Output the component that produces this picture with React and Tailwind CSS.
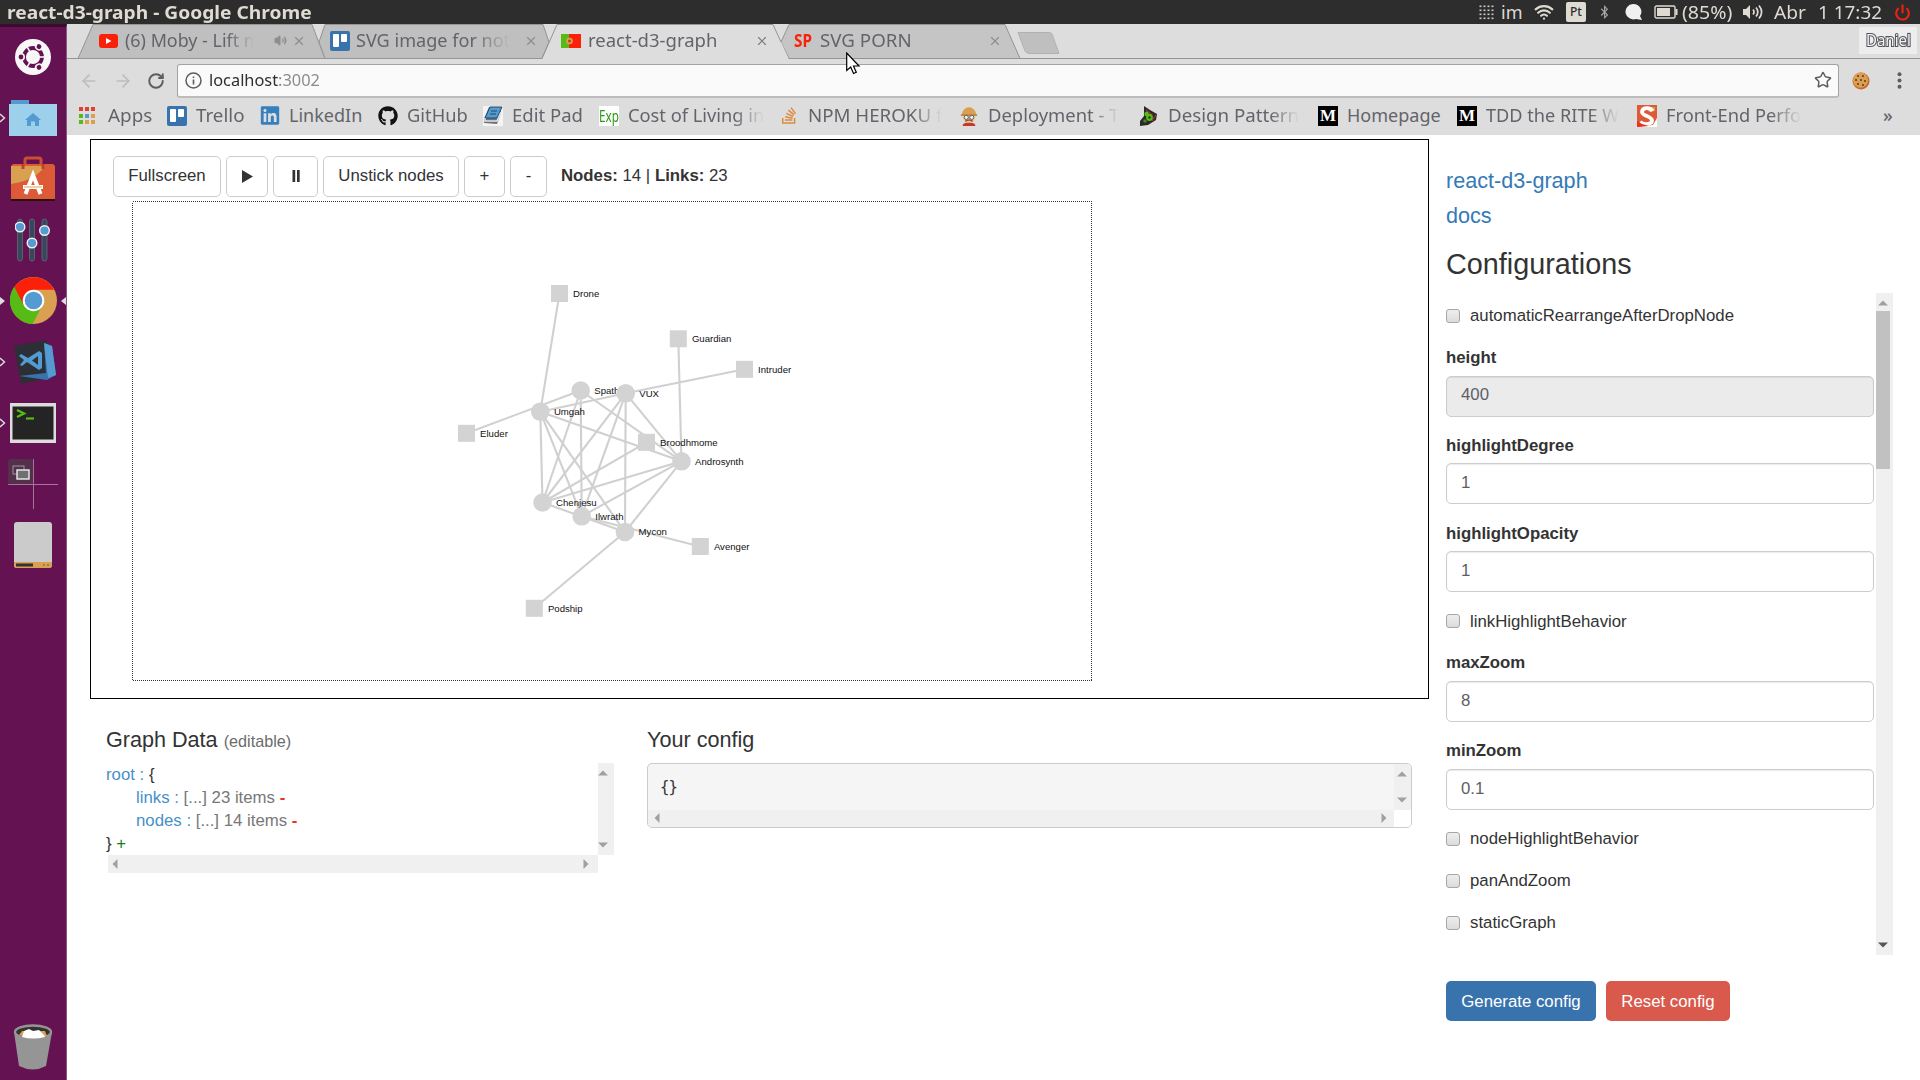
import React, { useLayoutEffect, useRef, useState } from "react";
import { FaGithub, FaLinkedin, FaStackOverflow, FaBluetoothB } from "react-icons/fa";
import { Wifi, Volume2, Power, Star, RotateCw, X, ArrowLeft, ArrowRight } from "lucide-react";

/* Stretches or narrows a line of text so that it fills its box exactly. */
function Fit({ className, children }) {
  const box = useRef(null);
  const text = useRef(null);
  const [scale, setScale] = useState(1);
  useLayoutEffect(() => {
    setScale(box.current.clientWidth / text.current.offsetWidth);
  }, []);
  return (
    <span ref={box} className={"block shrink-0 whitespace-nowrap " + className}>
      <span ref={text} className="inline-block origin-left" style={{ transform: `scaleX(${scale})` }}>
        {children}
      </span>
    </span>
  );
}

function TrelloIcon() {
  return (
    <svg width="20" height="20" viewBox="0 0 20 20" className="shrink-0">
      <rect width="20" height="20" rx="2" fill="#3873ae" />
      <rect x="3" y="3" width="6" height="13" rx="1" fill="#fff" />
      <rect x="11" y="3" width="6" height="8" rx="1" fill="#fff" />
    </svg>
  );
}

function MediumIcon() {
  return (
    <span className="flex h-5 w-5 shrink-0 items-center justify-center bg-black font-['Liberation_Serif'] text-[17px] font-bold leading-none text-white">
      M
    </span>
  );
}

function AppsIcon() {
  const colors = ["#e2402f", "#e2402f", "#e2402f", "#56bb14", "#539bd0", "#d8a050", "#56bb14", "#d8a050", "#d8a050"];
  return (
    <span className="mr-[2px] grid h-[17px] w-[18px] shrink-0 grid-cols-3 content-between justify-items-start">
      {colors.map((c, i) => (
        <span key={i} className="h-[4px] w-[4px]" style={{ backgroundColor: c }} />
      ))}
    </span>
  );
}

function EditPadIcon() {
  return (
    <svg width="20" height="20" viewBox="0 0 20 20" className="shrink-0">
      <rect width="20" height="20" fill="#f4f4f4" />
      <path d="M6 1 18 1 18 7 14 18 1 17 1 13Z" fill="#6f7276" />
      <path d="M7 1H19L14 12H2Z" fill="#539bd0" stroke="#24486b" />
      <path d="M2 12v3h12l4-9" fill="none" stroke="#dfe6ec" strokeWidth="1.5" />
      <path d="M8 5h6M7 8h6" stroke="#24486b" />
    </svg>
  );
}

function ExpIcon() {
  return (
    <span className="flex h-[20px] w-5 shrink-0 items-center bg-white font-['Noto_Sans'] text-[17px] leading-none text-[#2a9a12]">
      <Fit className="w-5">Exp</Fit>
    </span>
  );
}

function DeployIcon() {
  return (
    <svg width="20" height="20" viewBox="0 0 20 22" className="shrink-0">
      <ellipse cx="10" cy="12" rx="7" ry="7" fill="#ecc9a0" />
      <path d="M2 10a8 8.5 0 0 1 16 0Z" fill="#d8a050" />
      <path d="M1 10h18" stroke="#b9782c" strokeWidth="1.5" />
      <circle cx="7" cy="12.5" r="2.3" fill="#e8eef2" stroke="#555" />
      <circle cx="13" cy="12.5" r="2.3" fill="#e8eef2" stroke="#555" />
      <path d="M6 17q4-3 8 0" stroke="#8a5a2b" strokeWidth="1.6" fill="none" />
      <path d="M3 22q0-4 7-3.500q7-.5 7 3.500Z" fill="#c8372a" />
    </svg>
  );
}

function PatternIcon() {
  return (
    <svg width="20" height="20" viewBox="0 0 20 20" className="shrink-0">
      <path d="M5 0 11 4 18 8 17 14 9 19 1 20 1 15 5 10Z" fill="#2a2a2a" />
      <path d="M7 3 14 9 7 10Z" fill="#8b3a33" />
      <circle cx="7.500" cy="8" r="2.200" fill="#56bb14" />
      <circle cx="10.500" cy="11.500" r="3.400" fill="#56bb14" />
      <circle cx="10.500" cy="11.500" r="1.200" fill="#2a2a2a" />
      <circle cx="6" cy="15" r="1.800" fill="#3f8a1a" />
      <path d="M13 15 17 9" stroke="#c8372a" />
    </svg>
  );
}

function SmashingIcon() {
  return (
    <svg width="20" height="22" viewBox="0 0 20 22" className="shrink-0">
      <path d="M0 0H20V22H0Z" fill="#fff" />
      <path d="M0 0H20V13L16 20 0 22Z" fill="#dc5a36" />
      <path d="M8 2H18V6L12 7Z" fill="#d8a050" />
      <path d="M15.500 6C13 1.500 5 2.500 5 7c0 4 10 4 10 8.500 0 4-8 5-12 1.500" fill="none" stroke="#fff" strokeWidth="3.800" />
      <path d="M0 16 5 19 12 21 0 22Z" fill="#f0301c" />
    </svg>
  );
}

const bookmarks = [
  { box: "w-[88px]", label: "Apps", fit: "w-[44px]", icon: <AppsIcon /> },
  { box: "w-[93px]", label: "Trello", fit: "w-[49px]", icon: <TrelloIcon /> },
  { box: "w-[118px]", label: "LinkedIn", fit: "w-[73px]", icon: <FaLinkedin className="h-[21px] w-5 shrink-0 text-[#3580bd]" /> },
  { box: "w-[105px]", label: "GitHub", fit: "w-[61px]", icon: <FaGithub className="h-5 w-5 shrink-0 text-[#111]" /> },
  { box: "w-[116px]", label: "Edit Pad", fit: "w-[71px]", icon: <EditPadIcon /> },
  { box: "w-[180px]", label: "Cost of Living in", fit: "w-[136px]", icon: <ExpIcon />, fade: true },
  { box: "w-[180px]", label: "NPM HEROKU f", fit: "w-[134px]", icon: <FaStackOverflow className="h-[19px] w-5 shrink-0 text-[#dd8a3c]" />, fade: true },
  { box: "w-[180px]", label: "Deployment - T", fit: "w-[131px]", icon: <DeployIcon />, fade: true },
  { box: "w-[179px]", label: "Design Pattern", fit: "w-[131px]", icon: <PatternIcon />, fade: true },
  { box: "w-[139px]", label: "Homepage", fit: "w-[94px]", icon: <MediumIcon /> },
  { box: "w-[180px]", label: "TDD the RITE W", fit: "w-[133px]", icon: <MediumIcon />, fade: true },
  { box: "w-[180px]", label: "Front-End Perfo", fit: "w-[135px]", icon: <SmashingIcon />, fade: true },
];

function SystemBar() {
  return (
    <header className="flex h-6 shrink-0 items-center bg-[#2d2d2d] pl-[7px] font-['Noto_Sans',sans-serif] text-[18px] leading-6 text-[#dfdbd2]">
      <Fit className="w-[305px] font-bold">react-d3-graph - Google Chrome</Fit>
      <div className="ml-[1167px] flex items-center">
        <svg width="15" height="15" viewBox="0 0 15 15" className="shrink-0" fill="#c9c9c9">
          {[0.5, 4.5, 8.5, 12.5].map((y) => [0, 4, 8, 12].map((x) => <rect key={x + "-" + y} x={x + 0.5} y={y} width="2" height="1.600" />))}
        </svg>
        <Fit className="ml-[7px] w-[21px]">im</Fit>
        <Wifi className="ml-[12px] h-[20px] w-[20px] shrink-0" strokeWidth={2.6} />
        <span className="ml-[12px] flex h-[20px] w-[20px] shrink-0 items-center justify-center rounded-[2px] bg-[#dfdbd2] text-[12px] font-medium text-[#2d2d2d]">Pt</span>
        <FaBluetoothB className="ml-[13px] h-[14px] w-[11px] shrink-0 text-[#a9a9a9]" />
        <svg width="19" height="18" viewBox="0 0 19 18" className="ml-[14px] shrink-0">
          <path d="M9 1a8 7.700 0 1 0 3 15L18 17 16 13A8 7.700 0 0 0 9 1Z" fill="#f0f0f0" />
        </svg>
        <svg width="24" height="14" viewBox="0 0 24 14" className="ml-[11px] shrink-0">
          <rect x="1" y="1" width="20" height="12" rx="1.500" fill="none" stroke="#dfdbd2" strokeWidth="1.400" />
          <rect x="3" y="3" width="13" height="8" fill="#dfdbd2" />
          <rect x="21.500" y="4" width="2" height="6" fill="#dfdbd2" />
        </svg>
        <Fit className="ml-[4px] w-[50px]">(85%)</Fit>
        <svg width="20" height="18" viewBox="0 0 20 18" className="ml-[11px] shrink-0">
          <path d="M0 6H3L7 2V16L3 12H0Z" fill="#dfdbd2" />
          <path d="M10 6.500q2 2.500 0 5M13 4.500q3.600 4.500 0 9M16 2.500q5.200 6.500 0 13" fill="none" stroke="#dfdbd2" strokeWidth="1.700" />
        </svg>
        <Fit className="ml-[11px] w-[32px]">Abr</Fit>
        <Fit className="ml-[12px] w-[64px]">1 17:32</Fit>
        <Power className="ml-[12px] h-[17px] w-[17px] shrink-0 text-[#ee2211]" strokeWidth={3} />
      </div>
    </header>
  );
}

function Tile({ children, mark }) {
  return (
    <div className="relative flex h-[61px] w-[66px] shrink-0 items-center justify-center">
      {mark === "open" && (
        <svg width="6" height="10" viewBox="0 0 6 10" className="absolute left-0 top-[26px]">
          <path d="M0 1 4.500 5 0 9" fill="none" stroke="#ddd" strokeWidth="1.400" />
        </svg>
      )}
      {mark === "active" && (
        <>
          <svg width="5" height="10" viewBox="0 0 5 10" className="absolute left-0 top-[26px]">
            <path d="M0 1 5 5 0 9Z" fill="#ddd" />
          </svg>
          <svg width="5" height="10" viewBox="0 0 5 10" className="absolute right-0 top-[26px]">
            <path d="M5 1 0 5 5 9Z" fill="#ddd" />
          </svg>
        </>
      )}
      {children}
    </div>
  );
}

function Launcher() {
  return (
    <aside className="flex w-[67px] shrink-0 flex-col border-r border-t-[3px] border-r-[#8a5a7c] border-t-[#3d0b30] bg-[#651253] pb-[3px]">
      <div className="-mt-px">
        <Tile>
          <svg width="36" height="36" viewBox="0 0 36 36">
            <circle cx="18" cy="18" r="18" fill="#f7f7f7" />
            <circle cx="18" cy="18" r="9" fill="none" stroke="#651253" strokeWidth="3.800" />
            {[0, 120, 240].map((a) => (
              <g key={a} transform={`rotate(${a} 18 18)`}>
                <path d="M24 18H32" stroke="#f7f7f7" strokeWidth="1.600" />
                <circle cx="6" cy="18" r="3.200" fill="#651253" stroke="#f7f7f7" strokeWidth="1.600" />
              </g>
            ))}
          </svg>
        </Tile>
      </div>
      <Tile mark="open">
        <svg width="50" height="36" viewBox="0 0 50 36">
          <path d="M3 0H21V6H3Z" fill="#539bd0" />
          <rect x="1" y="4" width="48" height="32" fill="#9dd0ea" />
          <path d="M25 13 33 20H31V26H27V21.500H23V26H19V20H17Z" fill="#539bd0" />
        </svg>
      </Tile>
      <Tile>
        <svg width="46" height="46" viewBox="0 0 46 46">
          <path d="M15 12V4Q15 2 17 2H29Q31 2 31 4V12" fill="none" stroke="#c94f32" strokeWidth="3" />
          <path d="M3 8H43L45 10V44H1V10Z" fill="#dc5a36" />
          <path d="M1 10H35Q26 24 1 28Z" fill="#d8a050" />
          <path d="M13 8v5M33 8v5" stroke="#b8452c" strokeWidth="3" />
          <path d="M1 44H45" stroke="#2b1010" strokeWidth="2" />
          <path d="M15.500 38 23 19 30.500 38" fill="none" stroke="#fff" strokeWidth="4" />
          <path d="M13 31H33" stroke="#fff" strokeWidth="4" />
          <path d="M14 31H32" stroke="#d8a050" strokeWidth="1" />
        </svg>
      </Tile>
      <Tile>
        <svg width="36" height="44" viewBox="0 0 36 44">
          {[[5, 9], [17, 25], [29.5, 12.5]].map(([x, y]) => (
            <g key={x}>
              <rect x={x - 2.5} y="1" width="5" height="42" rx="2.500" fill="#34495e" stroke="#61606a" />
              <circle cx={x} cy={y} r="4.800" fill="#539bd0" stroke="#eee" strokeWidth="1.400" />
            </g>
          ))}
        </svg>
      </Tile>
      <Tile mark="active">
        <svg width="47" height="47" viewBox="0 0 48 48">
          <circle cx="24" cy="24" r="24" fill="#d8a050" />
          <path d="M24 24 4.500 10A24 24 0 0 0 23 48L33 29Z" fill="#56bb14" />
          <path d="M4.500 10A24 24 0 0 1 45 13H24L14 29Z" fill="#fb2008" />
          <circle cx="24" cy="24" r="11" fill="#fff" />
          <circle cx="24" cy="24" r="9" fill="#539bd0" />
        </svg>
      </Tile>
      <Tile mark="open">
        <svg width="44" height="46" viewBox="0 0 44 46" className="ml-1">
          <path d="M1 7 33 1 40 38 8 45Z" fill="#2d2f36" />
          <path d="M31 4 39 7 43 36 34 41 6 37 33 34Z" fill="#3873ae" />
          <path d="M31 4 39 7 43 36 35 39Z" fill="#539bd0" />
          <path d="M26 12 29 14V29L26 31 14 23 9 27 7 26 11 21 6 17 8 15 15 19Z" fill="#539bd0" />
          <path d="M25 17V26L19 21.500Z" fill="#2d2f36" />
        </svg>
      </Tile>
      <Tile mark="open">
        <svg width="46" height="40" viewBox="0 0 46 40">
          <rect width="46" height="40" fill="#dcdcdc" />
          <rect x="2.500" y="3.500" width="41" height="33" fill="#242424" />
          <path d="M7 7 14 10.500 7 14" fill="none" stroke="#56bb14" strokeWidth="2.400" />
          <path d="M16 15.500H24" stroke="#56bb14" strokeWidth="2.200" />
        </svg>
      </Tile>
      <Tile>
        <svg width="50" height="50" viewBox="0 0 50 50">
          <rect width="25" height="25" rx="3" fill="#54304d" />
          <path d="M25.500 0V50M0 25.500H50" stroke="#a5749a" />
          <rect x="5" y="7" width="11" height="8" fill="none" stroke="#999" />
          <rect x="9" y="11" width="12" height="9" fill="#707070" stroke="#eee" strokeWidth="1.400" />
        </svg>
      </Tile>
      <Tile>
        <svg width="40" height="46" viewBox="0 0 40 46">
          <rect x="1" width="38" height="46" rx="3" fill="#cbcbcb" />
          <path d="M1 40H39V43Q39 46 36 46H4Q1 46 1 43Z" fill="#d8a050" />
          <rect x="3" y="41.500" width="17" height="3" fill="#333" />
          <path d="M30 43h6" stroke="#7a5a2c" strokeDasharray="2 2" />
        </svg>
      </Tile>
      <div className="mt-auto">
        <Tile>
          <svg width="40" height="46" viewBox="0 0 40 46">
            <path d="M1 8 6 42Q20 49 33 42L39 8Z" fill="#959595" />
            <ellipse cx="20" cy="8" rx="18" ry="6.500" fill="#333" stroke="#959595" strokeWidth="2.400" />
            <path d="M6 11 9 7 32 7 34 12Q20 17 6 11Z" fill="#d8a050" />
            <path d="M9 13 11 7 16 5 20 7 26 6 31 11 32 13Q20 16 9 13Z" fill="#fff" />
          </svg>
        </Tile>
      </div>
    </aside>
  );
}

function TabStrip() {
  return (
    <div className="relative flex h-[35px] items-center pb-[2px] font-['Noto_Sans',sans-serif] text-[17.5px] leading-[33px] text-[#63646a]">
      <svg width="1853" height="35" viewBox="67 24 1853 35" className="absolute left-0 top-0">
        <path d="M67 58.500H1920" stroke="#949494" />
        <path d="M78 58.500 93 24.500H312L325 58.500Z" fill="#bfbfbf" stroke="#949494" />
        <path d="M319 42 325 24.500H543L549 42 542 58.500H325Z" fill="#bfbfbf" stroke="#949494" />
        <path d="M789 58.500 781 42 789 24.500H1005L1020 58.500Z" fill="#c5c5c5" stroke="#949494" />
        <path d="M542 59.500 557 24.500H773L781 42 789 59.500Z" fill="#dddddd" />
        <path d="M542 58.500 557 24.500H773L781 42" fill="none" stroke="#949494" />
        <path d="M1018 32.500H1049Q1051 32.500 1052 34L1059 53.500H1029Q1026 53 1025 51Z" fill="#bfbfbf" stroke="#b2b2b2" />
      </svg>
      <div className="relative ml-[32px] flex w-[231px] items-center">
        <svg width="19" height="14" viewBox="0 0 19 14" className="shrink-0">
          <rect width="19" height="14" rx="3" fill="#f92108" />
          <path d="M7 4 12.500 7 7 10Z" fill="#fff" />
        </svg>
        <Fit className="ml-[7px] w-[136px] [mask-image:linear-gradient(to_right,black_75%,transparent_95%)]">(6) Moby - Lift m</Fit>
        <Volume2 className="ml-[13px] h-[13px] w-[13px] shrink-0 text-[#8d8d8d]" fill="#8d8d8d" />
        <X className="ml-[5px] h-[14px] w-[14px] shrink-0 text-[#8d8d8d]" />
      </div>
      <div className="relative flex w-[231px] items-center">
        <TrelloIcon />
        <Fit className="ml-[6px] w-[154px] [mask-image:linear-gradient(to_right,black_75%,transparent)]">SVG image for not</Fit>
        <X className="ml-[14px] h-[14px] w-[14px] shrink-0 text-[#8d8d8d]" />
      </div>
      <div className="relative flex w-[233px] items-center">
        <svg width="20" height="14" viewBox="0 0 20 14" className="shrink-0">
          <rect width="20" height="14" fill="#fb2008" />
          <rect width="8" height="14" fill="#56bb14" />
          <circle cx="8.500" cy="7" r="3.300" fill="#d8a050" />
          <circle cx="8.500" cy="7" r="1.500" fill="#c8372a" />
        </svg>
        <Fit className="ml-[7px] w-[129px]">react-d3-graph</Fit>
        <X className="ml-[38px] h-[14px] w-[14px] shrink-0 text-[#7d7d7d]" />
      </div>
      <div className="relative flex items-center">
        <Fit className="w-[18px] text-[17px] font-bold text-[#f92108]">SP</Fit>
        <Fit className="ml-[8px] w-[92px]">SVG PORN</Fit>
        <X className="ml-[76px] h-[14px] w-[14px] shrink-0 text-[#8d8d8d]" />
      </div>
      <span className="relative ml-auto mr-[3px] flex h-[27px] w-[58px] items-center justify-center bg-[#ededed] text-[16px] text-[#f4f4f4] [-webkit-text-stroke:2.2px_#55565c] [paint-order:stroke_fill]">
        <Fit className="w-[45px]">Daniel</Fit>
      </span>
      <svg width="16" height="24" viewBox="0 0 16 24" className="absolute left-[779px] top-[28px] z-10">
        <path d="M.7 1V18.500L4.700 15 7.500 21.500 10.300 20.200 7.500 14H13Z" fill="#fff" stroke="#000" strokeWidth="1.200" />
      </svg>
    </div>
  );
}

function Toolbar() {
  return (
    <div className="flex h-[40px] items-center pt-[3px]">
      <ArrowLeft className="ml-[12px] h-[20px] w-[20px] text-[#bdbdbd]" />
      <ArrowRight className="ml-[14px] h-[20px] w-[20px] text-[#bdbdbd]" />
      <RotateCw className="ml-[14px] h-[18px] w-[18px] text-[#5c5d62]" strokeWidth={2.6} />
      <div className="ml-[12px] flex h-[34px] w-[1662px] items-center rounded-[3px] border border-b-2 border-[#a3a3a3] border-b-[#bcbcbc] bg-[#fafafa] pl-[7px] pr-[6px] font-['Noto_Sans',sans-serif] text-[16.500px] leading-8">
        <svg width="17" height="17" viewBox="0 0 17 17" className="shrink-0">
          <circle cx="8.500" cy="8.500" r="7.500" fill="none" stroke="#5c5d62" strokeWidth="1.500" />
          <path d="M8.500 7.500V12.500M8.500 4.500V6" stroke="#5c5d62" strokeWidth="1.600" />
        </svg>
        <Fit className="ml-[7px] w-[111px] text-[#2d2f33]">
          localhost<span className="text-[#8c8c8c]">:3002</span>
        </Fit>
        <Star className="ml-auto h-[18px] w-[18px] text-[#5c5d62]" />
      </div>
      <svg width="18" height="18" viewBox="0 0 18 18" className="ml-[13px]">
        <circle cx="9" cy="9" r="8.500" fill="#c9652e" />
        <circle cx="8.500" cy="8.200" r="7.600" fill="#d8a050" />
        {[[6, 4], [11, 4], [4, 8], [9, 8], [13, 9], [6, 12], [11, 13]].map(([x, y]) => (
          <circle key={x + "-" + y} cx={x} cy={y} r="1" fill="#6b3519" />
        ))}
      </svg>
      <svg width="5" height="17" viewBox="0 0 5 17" className="ml-[27px]" fill="#5c5d62">
        <circle cx="2.500" cy="2.200" r="2" />
        <circle cx="2.500" cy="8.500" r="2" />
        <circle cx="2.500" cy="14.800" r="2" />
      </svg>
    </div>
  );
}

function BookmarkBar() {
  return (
    <div className="flex h-[36px] items-center pb-[3px] pl-[12px] font-['Noto_Sans',sans-serif] text-[18px] leading-[33px] text-[#63646a]">
      {bookmarks.map((b) => (
        <div key={b.label} className={"flex shrink-0 items-center gap-[9px] " + b.box}>
          {b.icon}
          <Fit className={b.fit + (b.fade ? " [mask-image:linear-gradient(to_right,black_78%,transparent_100%)]" : "")}>{b.label}</Fit>
        </div>
      ))}
      <span className="ml-[66px] font-medium">»</span>
    </div>
  );
}

const nodes = [
  ["Androsynth", 681.5, 461.3, "c"], ["Chenjesu", 542.5, 502.5, "c"], ["Ilwrath", 581.7, 516.3, "c"],
  ["Mycon", 625, 532, "c"], ["Spathi", 580.7, 390.5, "c"], ["Umgah", 540.3, 411.7, "c"], ["VUX", 625.7, 393.3, "c"],
  ["Guardian", 678.3, 338.8, "s"], ["Broodhmome", 646.5, 442.3, "s"], ["Avenger", 700.3, 546.5, "s"],
  ["Podship", 534.3, 608.3, "s"], ["Eluder", 466.5, 433.3, "s"], ["Drone", 559.5, 293.5, "s"], ["Intruder", 744.5, 369.3, "s"],
];
const links = [
  ["Drone", "Umgah"], ["Guardian", "Androsynth"], ["Intruder", "VUX"], ["Eluder", "Spathi"],
  ["Umgah", "Androsynth"], ["Umgah", "VUX"], ["Umgah", "Chenjesu"], ["Umgah", "Ilwrath"], ["Umgah", "Mycon"],
  ["Spathi", "Chenjesu"], ["Spathi", "Ilwrath"], ["Spathi", "Androsynth"],
  ["VUX", "Chenjesu"], ["VUX", "Ilwrath"], ["VUX", "Mycon"], ["VUX", "Androsynth"],
  ["Broodhmome", "Chenjesu"], ["Androsynth", "Chenjesu"], ["Androsynth", "Ilwrath"], ["Androsynth", "Mycon"],
  ["Chenjesu", "Mycon"], ["Ilwrath", "Avenger"], ["Podship", "Mycon"],
];

function Graph() {
  const at = Object.fromEntries(nodes.map((n) => [n[0], n]));
  return (
    <svg width="960" height="480" viewBox="132 201 960 480" className="ml-[41px] mt-[4px] block">
      <rect x="132.500" y="201.500" width="959" height="479" fill="none" stroke="#333" strokeDasharray="1 1" shapeRendering="crispEdges" />
      {links.map(([a, b]) => (
        <line key={a + b} x1={at[a][1]} y1={at[a][2]} x2={at[b][1]} y2={at[b][2]} stroke="#d0d0d0" strokeWidth="2.100" />
      ))}
      {nodes.map(([name, x, y, kind]) => (
        <g key={name}>
          {kind === "c" ? <circle cx={x} cy={y} r="9.300" fill="#d3d3d3" /> : <rect x={x - 8.5} y={y - 8.5} width="17" height="17" fill="#d3d3d3" />}
          <text x={x + 13.6} y={y + 3.3} fontSize="9.600" fill="#111">{name}</text>
        </g>
      ))}
    </svg>
  );
}

function ToolButton({ className, children }) {
  return (
    <button className={"flex h-[41px] items-center justify-center rounded-[5px] border border-[#ccc] bg-white pb-px " + className}>{children}</button>
  );
}

function Arrow({ dir, className, dark }) {
  const d = { up: "M0 9 6 3 12 9Z", down: "M0 3 6 9 12 3Z", left: "M9 0 3 6 9 12Z", right: "M3 0 9 6 3 12Z" }[dir];
  return (
    <svg width="10" height="10" viewBox="0 0 12 12" className={"shrink-0 " + (className || "")}>
      <path d={d} fill={dark ? "#555" : "#a0a0a0"} />
    </svg>
  );
}

function DataLine({ name }) {
  return (
    <p className="pl-[30px] text-[#777]">
      <span className="text-[#4690c8]">{name.key} :</span> [...] {name.count} items <span className="font-bold text-[#f03020]">-</span>
    </p>
  );
}

function Check({ label }) {
  return (
    <label className="flex h-[42px] items-center gap-[10px] pt-[2px]">
      <span className="h-[14px] w-[14px] rounded-[3px] border border-[#a6a6a6] bg-gradient-to-b from-[#eee] to-[#dcdcdc]" />
      {label}
    </label>
  );
}

function Field({ label, value, disabled }) {
  return (
    <div className="h-[87.800px] pt-[10px]">
      <p className="h-[29.500px] font-bold leading-6">{label}</p>
      <div className={"flex h-[41px] items-center rounded-[5px] border border-[#ccc] px-[14px] pb-[2px] text-[#5c6066] shadow-[inset_0_1px_1px_rgba(0,0,0,0.08)] " + (disabled ? "bg-[#ebebeb]" : "bg-white")}>
        {value}
      </div>
    </div>
  );
}

function Sandbox() {
  return (
    <div className="w-[1339px] shrink-0">
      <section className="h-[560px] border border-black pt-[16px]">
        <div className="ml-[22px] flex items-center gap-[5px]">
          <ToolButton className="w-[108px]">Fullscreen</ToolButton>
          <ToolButton className="w-[42px]">
            <svg width="11" height="14" viewBox="0 0 11 14"><path d="M0 1 11 7.500 0 14Z" fill="#333" /></svg>
          </ToolButton>
          <ToolButton className="w-[45px]">
            <svg width="8" height="12" viewBox="0 0 8 12"><path d="M.5 0h2.700v12H.5ZM5 0h2.700v12H5Z" fill="#333" /></svg>
          </ToolButton>
          <ToolButton className="w-[136px]">Unstick nodes</ToolButton>
          <ToolButton className="w-[41px]">+</ToolButton>
          <ToolButton className="w-[37px]">-</ToolButton>
          <p className="mb-px ml-[9px]"><b>Nodes:</b> 14 | <b>Links:</b> 23</p>
        </div>
        <Graph />
      </section>
      <div className="flex pl-[16px] pt-[28px]">
        <section className="w-[541px]">
          <h4 className="h-[36px] text-[21.600px] leading-[26px]">
            Graph Data <span className="text-[16.200px] text-[#6c6c6c]">(editable)</span>
          </h4>
          <div className="flex h-[92px] w-[508px]">
            <div className="flex-1 leading-[23px]">
              <p><span className="text-[#4690c8]">root :</span> {"{"}</p>
              <DataLine name={{ key: "links", count: 23 }} />
              <DataLine name={{ key: "nodes", count: 14 }} />
              <p>{"}"} <span className="text-[#188018]">+</span></p>
            </div>
            <div className="flex w-[16px] flex-col justify-between bg-[#f0f0f0] py-[5px]">
              <Arrow dir="up" />
              <Arrow dir="down" />
            </div>
          </div>
          <div className="ml-[2px] flex h-[18px] w-[490px] items-center justify-between bg-[#f0f0f0] pl-[2px] pr-[7px]">
            <Arrow dir="left" />
            <Arrow dir="right" />
          </div>
        </section>
        <section>
          <h4 className="h-[36px] text-[21.600px] leading-[26px]">Your config</h4>
          <div className="h-[65px] w-[765px] overflow-hidden rounded-[5px] border border-[#ccc] bg-[#f5f5f5]">
            <div className="flex h-[46px] justify-between pl-[12px]">
              <pre className="pt-[12px] font-['DejaVu_Sans_Mono',monospace] text-[15.600px] leading-[22px] tracking-[-1px]">{"{}"}</pre>
              <div className="flex w-[17px] flex-col justify-between bg-[#f0f0f0] pb-[5px] pl-[3px] pt-[5px]">
                <Arrow dir="up" />
                <Arrow dir="down" />
              </div>
            </div>
            <div className="flex h-[17px]">
              <div className="flex flex-1 items-center justify-between bg-[#f0f0f0] pb-px pl-[4px] pr-[5px]">
                <Arrow dir="left" />
                <Arrow dir="right" />
              </div>
              <div className="w-[17px] bg-white" />
            </div>
          </div>
        </section>
      </div>
    </div>
  );
}

function ConfigPanel() {
  return (
    <div className="ml-[17px] w-[447px] pt-[24px]">
      <nav className="text-[21.600px] leading-[35px] text-[#337ab7]">
        <p>react-d3-graph</p>
        <p>docs</p>
      </nav>
      <h3 className="h-[60px] text-[28.800px] leading-[62px]">Configurations</h3>
      <div className="flex h-[662px]">
        <div className="w-[429px] pt-px">
          <Check label="automaticRearrangeAfterDropNode" />
          <Field label="height" value="400" disabled />
          <Field label="highlightDegree" value="1" />
          <Field label="highlightOpacity" value="1" />
          <Check label="linkHighlightBehavior" />
          <Field label="maxZoom" value="8" />
          <Field label="minZoom" value="0.1" />
          <Check label="nodeHighlightBehavior" />
          <Check label="panAndZoom" />
          <Check label="staticGraph" />
        </div>
        <div className="ml-[2px] flex w-[17px] flex-col bg-[#f0f0f0]">
          <Arrow dir="up" className="ml-[2px] mt-[5px]" />
          <div className="mt-[3px] h-[158px] w-[14px] bg-[#c1c1c1]" />
          <Arrow dir="down" dark className="mb-[5px] ml-[2px] mt-auto" />
        </div>
      </div>
      <div className="mt-[26px] flex gap-[10px] text-white">
        <button className="h-[40px] w-[150px] rounded-[5px] bg-[#3873ae] pt-px">Generate config</button>
        <button className="h-[40px] w-[124px] rounded-[5px] bg-[#d9594c] pt-px">Reset config</button>
      </div>
    </div>
  );
}

export default function App() {
  return (
    <div className="flex h-[1080px] w-[1920px] flex-col overflow-hidden bg-white font-['Liberation_Sans',sans-serif] text-[16.800px] text-[#333]">
      <SystemBar />
      <div className="flex min-h-0 flex-1">
        <Launcher />
        <div className="flex min-w-0 flex-1 flex-col">
          <div className="h-[111px] shrink-0 bg-[#dddddd]">
            <TabStrip />
            <Toolbar />
            <BookmarkBar />
          </div>
          <main className="flex flex-1 pl-[23px] pt-[4px]">
            <Sandbox />
            <ConfigPanel />
          </main>
        </div>
      </div>
    </div>
  );
}
